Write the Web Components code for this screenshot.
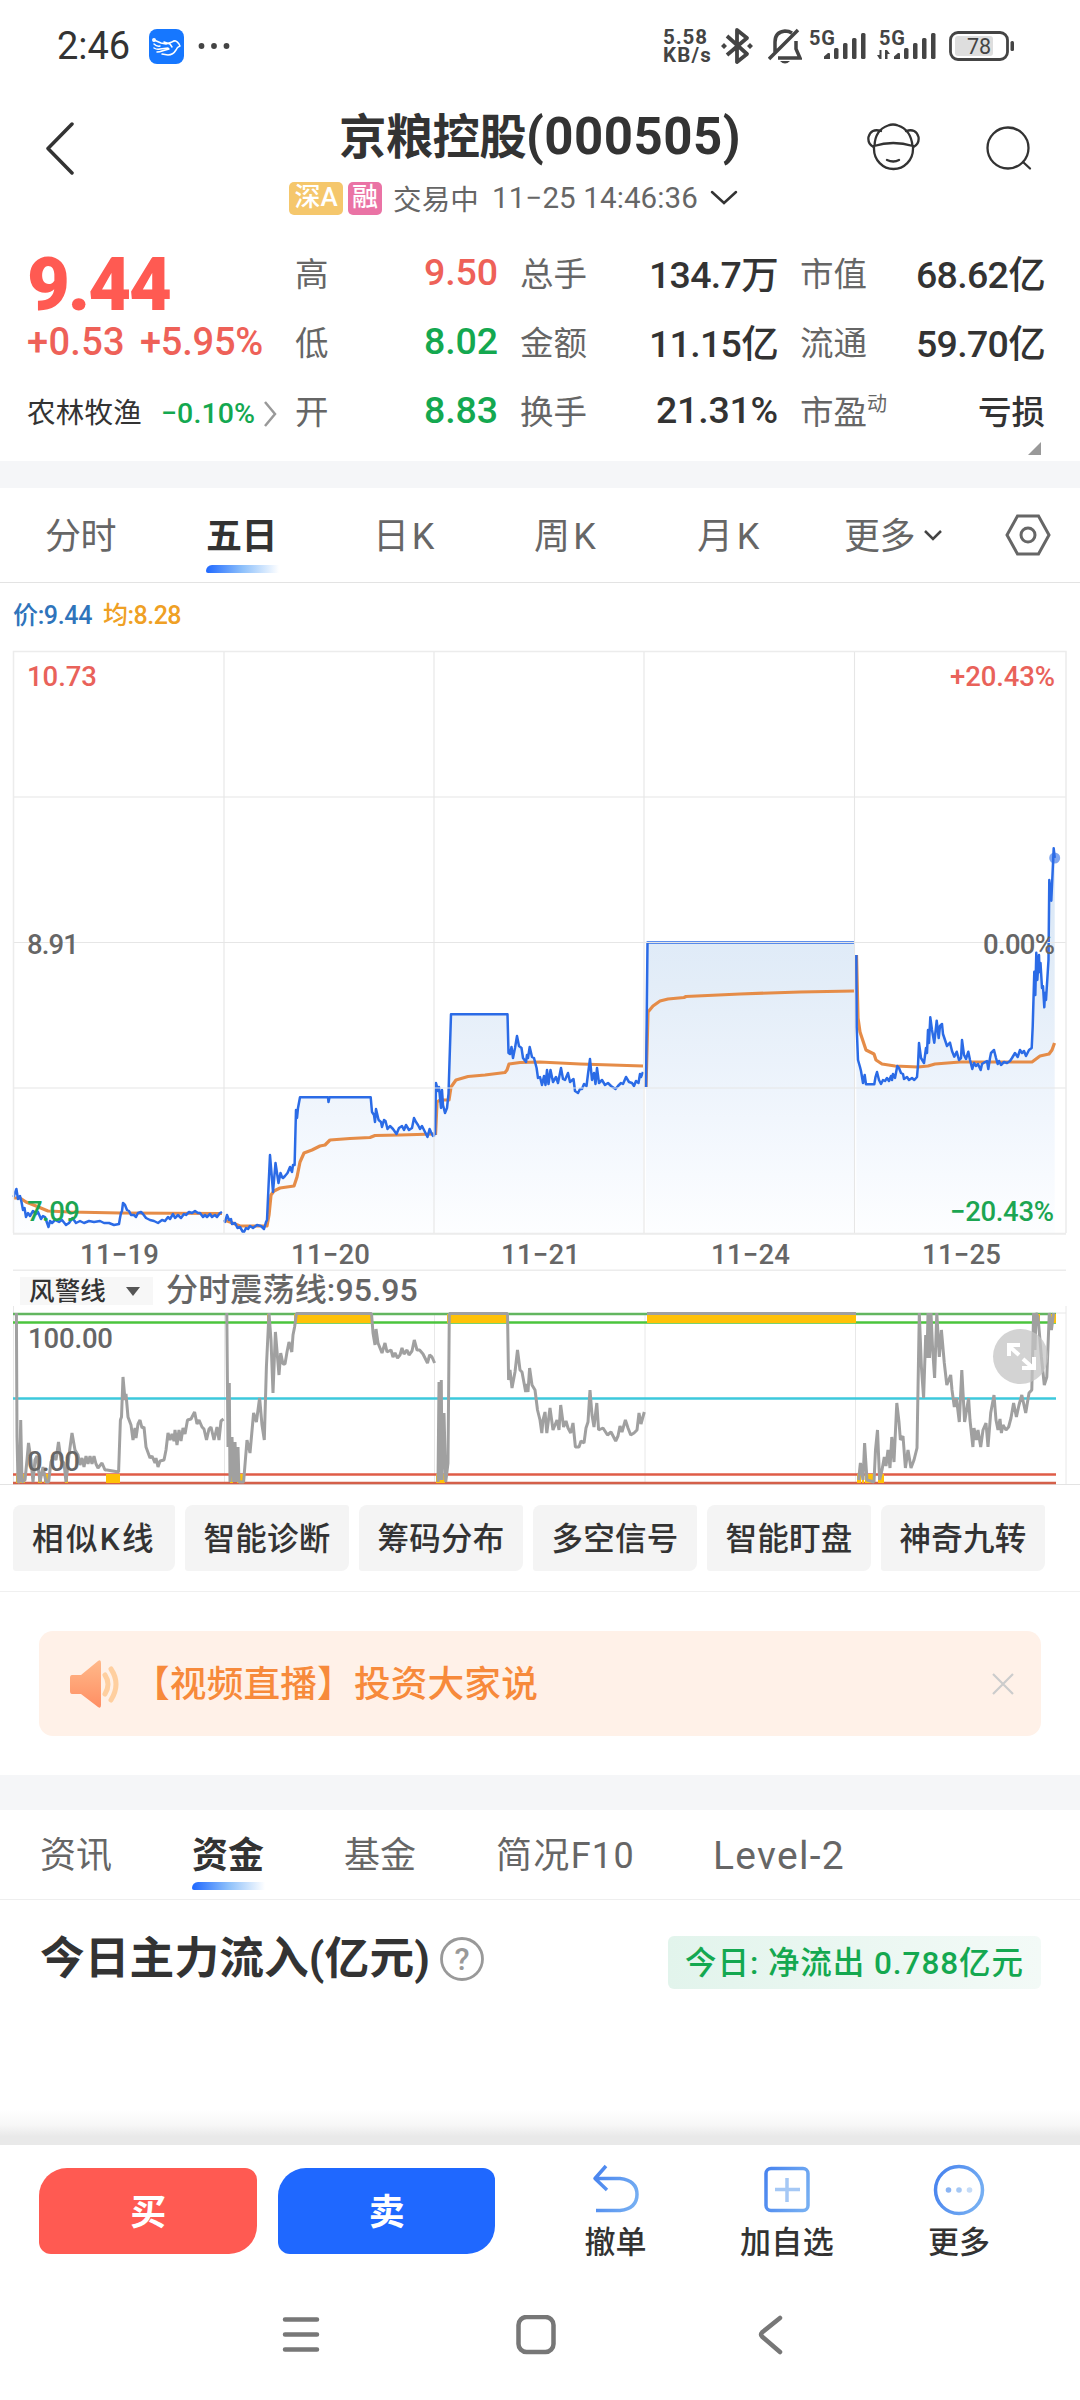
<!DOCTYPE html>
<html lang="zh-CN">
<head>
<meta charset="utf-8">
<title>京粮控股(000505)</title>
<style>
  html, body {
    margin: 0;
    padding: 0;
    background: #fff;
  }

  body {
    width: 1080px;
    height: 2400px;
    overflow: hidden;
    font-family: Roboto, "Noto Sans CJK SC", sans-serif;
    color: #333;
  }

  stock-page {
    display: flex;
    flex-direction: column;
    height: 2400px;
  }
</style>
</head>
<body>
<stock-page>
  <status-bar></status-bar>
  <stock-header name="京粮控股" code="000505"></stock-header>
  <quote-panel></quote-panel>
  <section-gap style="--h: 27px"></section-gap>
  <tab-strip style="--h: 94px; --dx: 45px; --line: #e3e3e3">
    <tab-item style="width: 161px" w="71">分时</tab-item>
    <tab-item style="width: 167px" w="71" active>五日</tab-item>
    <tab-item style="width: 161px" w="64">日K</tab-item>
    <tab-item style="width: 163px" w="65">周K</tab-item>
    <tab-item style="width: 147px" w="66">月K</tab-item>
    <tab-item style="width: 161px" w="71" more>更多</tab-item>
    <svg width="46" height="42" viewBox="0 0 46 42" fill="none" stroke="#666" stroke-width="3"><path d="M12.500 2h21L44 21 33.500 40h-21L2 21z"/><circle cx="23" cy="21" r="7"/></svg>
  </tab-strip>
  <price-chart></price-chart>
  <alert-chart></alert-chart>
  <chip-row>
    <chip-item style="width: 162px" w="124">相似K线</chip-item>
    <chip-item w="127">智能诊断</chip-item>
    <chip-item w="127">筹码分布</chip-item>
    <chip-item w="127">多空信号</chip-item>
    <chip-item w="127">智能盯盘</chip-item>
    <chip-item w="127">神奇九转</chip-item>
  </chip-row>
  <live-banner>【视频直播】投资大家说</live-banner>
  <section-gap style="--h: 35px"></section-gap>
  <tab-strip style="--h: 89px; --dx: 40px; --line: #eee">
    <tab-item style="width: 152px" w="72">资讯</tab-item>
    <tab-item style="width: 152px" w="72" active>资金</tab-item>
    <tab-item style="width: 152px" w="72">基金</tab-item>
    <tab-item style="width: 217px" w="139">简况F10</tab-item>
    <tab-item style="--lift: -2px; font-size: 39px" w="132">Level-2</tab-item>
  </tab-strip>
  <fund-summary></fund-summary>
  <trade-bar></trade-bar>
  <system-nav></system-nav>
</stock-page>

<script>
/**
 * Attach an open shadow root holding the given markup.
 * @param {HTMLElement} el
 * @param {string} html
 */
function render(el, html) {
  const template = document.createElement('template');
  template.innerHTML = html;
  el.attachShadow({mode: 'open'}).appendChild(template.content.cloneNode(true));
}

/**
 * Top status bar: clock, network, battery.
 */
class StatusBar extends HTMLElement {
  constructor() {
    super();
    const bars = (x) => `
      <path d="M${x} 29v-2.500l4-3.500q2-.500 2 1v5z"/>
      <rect x="${x + 10}" y="18" width="4.500" height="11" rx="1.500"/>
      <rect x="${x + 19}" y="13" width="4.500" height="16" rx="1.500"/>
      <rect x="${x + 28}" y="8" width="4.500" height="21" rx="1.500"/>
      <rect x="${x + 37}" y="3" width="4.500" height="26" rx="1.500"/>`;
    render(this, `
      <style>
        :host { display: flex; align-items: center; flex: none; height: 92px; padding: 0 65px 0 57px; box-sizing: border-box; }
        .time { font-size: 38px; line-height: 44px; }
        .app { margin-left: 19px; }
        .dots { margin-left: 14px; }
        .fill { flex: 1; }
        .speed { font-size: 20.500px; line-height: 18px; font-weight: 700; width: 49px; margin-right: 1px; color: #444; }
        .speed div { white-space: nowrap; }
        svg { flex: none; display: block; }
        .bt { margin-left: 7px; }
        .bell { margin-left: 14px; }
        .cell { margin-left: 7px; }
        .cell + .cell { margin-left: 10px; }
        .bat { margin-left: 12px; }
      </style>
      <fit-text class="time" w="73">2:46</fit-text>
      <svg class="app" width="35" height="35" viewBox="0 0 35 35">
        <rect width="35" height="35" rx="8" fill="#1677ff"/>
        <g fill="none" stroke="#fff" stroke-width="1.500" stroke-linecap="round" stroke-linejoin="round">
          <path d="M5 11l7 3 5 1 6-2q4-3 7 2l1 2q-3 1-4 4-3 5-8 5l-6-1M5 15q3 3 6 2M5 19q3 2 6 1l8-1M8 23q3 0 5-1l7-2M15 13l6 2 2 3"/>
          <circle cx="5" cy="11" r="1.200"/>
        </g>
      </svg>
      <svg class="dots" width="32" height="8" fill="#444"><circle cx="3.500" cy="4" r="2.900"/><circle cx="16" cy="4" r="2.900"/><circle cx="28.500" cy="4" r="2.900"/></svg>
      <div class="fill"></div>
      <div class="speed"><div><fit-text w="45">5.58</fit-text></div><div><fit-text w="49">KB/s</fit-text></div></div>
      <svg class="bt" width="34" height="38" viewBox="0 0 34 38" fill="none" stroke="#444" stroke-width="3.800" stroke-linejoin="round">
        <path d="M7 9l20 18-10 8V3l10 8L7 28"/><path d="M1 19l3-3 3 3-3 3zM27 19l3-3 3 3-3 3z" fill="#444" stroke="none"/>
      </svg>
      <svg class="bell" width="34" height="38" viewBox="0 0 34 38" fill="none" stroke="#444" stroke-width="3.500">
        <path d="M1 32L30 3M7 25V15q0-10 10-11 4 0 7 2M28 14v8l4 9H10"/><path d="M12 34h10q-5 5-10 0z" fill="#444" stroke="none"/>
      </svg>
      <svg class="cell" width="58" height="44" viewBox="0 -6 58 44" fill="#444">
        <text x="0" y="15" font-size="20" font-weight="700" textLength="26">5G</text>${bars(15)}
      </svg>
      <svg class="cell" width="60" height="44" viewBox="0 -6 60 44" fill="#444">
        <text x="2" y="15" font-size="20" font-weight="700" textLength="26">5G</text>${bars(17)}
        <path d="M4.500 20v9H2.500L0 25h2.500v-5zM8 29v-9h2l3 4h-2.500v5z"/>
      </svg>
      <svg class="bat" width="66" height="30" viewBox="0 0 66 30">
        <rect x="6" y="5" width="38" height="20" rx="3" fill="#dedede"/>
        <rect x="1.500" y="1.500" width="57" height="27" rx="7.500" fill="none" stroke="#444" stroke-width="2.800"/>
        <rect x="61.500" y="10" width="3.500" height="10" rx="1.500" fill="#444"/>
        <text x="18" y="22.500" font-size="21.500" fill="#444" textLength="24">78</text>
      </svg>
    `);
  }
}

/**
 * Title row with back, assistant and search buttons.
 */
class StockHeader extends HTMLElement {
  constructor() {
    super();
    render(this, `
      <style>
        :host { display: grid; grid-template-columns: 289px 1fr 289px; flex: none; height: 138px; }
        .mid { display: flex; flex-direction: column; align-items: center; padding-top: 14px; }
        .title { display: flex; align-items: baseline; height: 62px; font-size: 47.500px; line-height: 62px; font-weight: 700; white-space: nowrap; }
        .code { font-size: 51px; }
        .sub { display: flex; align-items: center; align-self: stretch; margin-top: 12px; height: 36px; font-size: 28.500px; color: #666; white-space: nowrap; }
        .tag { display: block; height: 33px; line-height: 31px; border-radius: 5px; color: #fff; text-align: center; font-size: 26px; font-weight: 500; }
        .sz { width: 54px; background: #f5c76c; margin-right: 5px; }
        .rong { width: 34px; background: #ea73a5; margin-right: 11px; }
        .clock { margin-left: 13px; font-size: 29.500px; }
        .down { margin-left: 12px; }
        .cn { margin-top: -2px; }
        .back { padding: 30px 0 0 44px; }
        .tools { display: flex; gap: 66px; padding: 31px 0 0 75px; }
        svg { display: block; fill: none; stroke: #333; stroke-linecap: round; flex: none; }
      </style>
      <div class="back"><svg width="32" height="54" viewBox="0 0 32 54" stroke-width="3.500"><path d="M28 2L4 26.500 28 51" stroke-linejoin="round"/></svg></div>
      <div class="mid">
        <div class="title"><fit-text w="187">${this.getAttribute('name')}</fit-text><fit-text class="code" w="215">(${this.getAttribute('code')})</fit-text></div>
        <div class="sub">
          <span class="tag sz">深A</span><span class="tag rong">融</span>
          <fit-text class="cn" w="86">交易中</fit-text><fit-text class="clock" w="206">11−25 14:46:36</fit-text>
          <svg class="down" width="28" height="16" viewBox="0 0 28 16" stroke-width="2.500"><path d="M2 2l12 11L26 2"/></svg>
        </div>
      </div>
      <div class="tools">
        <svg width="54" height="50" viewBox="0 0 54 50" stroke-width="2.300">
          <path d="M8.500 23Q9 7 22 2.500q5-2 10 0Q45 7 46.500 23M8 23q19-6 39 0M8 23v3a19.500 20 0 0 0 39 0v-3M21 37q6.500 3 12 0"/>
          <path d="M15 8Q5 5 2.500 14q-1 7 5 10M40 8q10-3 12.500 6 1 7-5 10"/>
        </svg>
        <svg width="50" height="50" viewBox="0 0 50 50" stroke-width="2.300"><circle cx="22" cy="25" r="20.500"/><path d="M37 39l7 6.500"/></svg>
      </div>
    `);
  }
}

/**
 * Last price and the key figures beside it.
 */
class QuotePanel extends HTMLElement {
  constructor() {
    super();
    const rows = [
      ['高', '9.50', 74, 'up', '总手', '134.7万', 129, '', '市值', '68.62亿', 129, ''],
      ['低', '8.02', 74, 'down', '金额', '11.15亿', 129, '', '流通', '59.70亿', 129, ''],
      ['开', '8.83', 74, 'down', '换手', '21.31%', 122, '', '市盈', '亏损', 67, 'cn'],
    ];
    const cells = rows.map((row) => {
      let html = '';
      for (let i = 0; i < row.length; i += 4) {
        const [label, value, w, cls] = row.slice(i, i + 4);
        const mark = label === '市盈' ? '<sup>动</sup>' : '';
        html += `<div class="cell"><span class="label">${label}${mark}</span><fit-text class="${cls}" w="${w}">${value}</fit-text></div>`;
      }
      return html;
    }).join('');
    render(this, `
      <style>
        :host { display: grid; grid-template-columns: 268px 1fr; flex: none; height: 231px; padding: 0 35px 0 27px; box-sizing: border-box; overflow: hidden; }
        .price { font-size: 74px; line-height: 80px; font-weight: 900; color: #ff5a52; margin-top: 15px; height: 80px; }
        .chg { display: flex; gap: 15px; font-size: 38px; line-height: 44px; color: #ee6158; margin-top: -5px; font-weight: 500; }
        .sector { display: flex; align-items: center; margin-top: 30px; line-height: 40px; font-size: 28.500px; }
        .sector .down { margin: 0 8px 0 19px; font-weight: 500; }
        .grid { display: grid; grid-template-columns: 203px 258px 245px; column-gap: 22px; grid-template-rows: 69px 69px 69px; padding-top: 7px; }
        .cell { display: flex; justify-content: space-between; align-items: center; font-size: 37.500px; font-weight: 500; white-space: nowrap; }
        .label { font-size: 33.500px; color: #666; font-weight: 400; }
        .up { color: #ee6158; }
        .down { color: #14a850; }
        .cn { font-size: 33.500px; font-weight: 500; }
        sup { font-size: 20px; vertical-align: 13px; line-height: 0; }
        .corner { justify-self: end; grid-column: 3; margin-top: -2px; margin-right: 4px; width: 13px; height: 13px; background: #999; clip-path: polygon(100% 0, 100% 100%, 0 100%); }
      </style>
      <div>
        <div class="price"><fit-text w="143">9.44</fit-text></div>
        <div class="chg"><fit-text w="98">+0.53</fit-text><fit-text w="123">+5.95%</fit-text></div>
        <div class="sector"><fit-text w="115">农林牧渔</fit-text><fit-text class="down" w="94">−0.10%</fit-text>
          <svg width="14" height="28" viewBox="0 0 14 28" fill="none" stroke="#999" stroke-width="2.500"><path d="M2 2l10 12L2 26"/></svg></div>
      </div>
      <div class="grid">${cells}<div class="corner"></div></div>
    `);
  }
}

class SectionGap extends HTMLElement {
  constructor() {
    super();
    render(this, '<style>:host { display: block; flex: none; height: var(--h); background: #f5f6f8; }</style>');
  }
}

class TabStrip extends HTMLElement {
  constructor() {
    super();
    render(this, `
      <style>
        :host { display: flex; align-items: center; flex: none; height: var(--h); padding-left: var(--dx); border-bottom: 1.500px solid var(--line); }
      </style>
      <slot></slot>
    `);
  }
}

/**
 * One tab; "active" draws the underline, "more" the small arrow.
 */
class TabItem extends HTMLElement {
  constructor() {
    super();
    const arrow = this.hasAttribute('more')
      ? '<svg width="20" height="12" viewBox="0 0 20 12" fill="none" stroke="#444" stroke-width="2.500"><path d="M2 2l8 8 8-8"/></svg>' : '';
    render(this, `
      <style>
        :host { display: flex; align-items: center; gap: 8px; height: 100%; position: relative; flex: none; font-size: 36px; color: #666; }
        :host([active]) { font-weight: 700; color: #333; }
        :host([active])::after {
          content: ""; position: absolute; left: 0; bottom: 9px; width: 73px; height: 8px;
          border-radius: 6px 0 0 2px; background: linear-gradient(90deg, #1f68ff, #8dc0fb 50%, #fff);
        }
        fit-text { margin-bottom: var(--lift, 5px); }
      </style>
      <fit-text w="${this.getAttribute('w')}"><slot></slot></fit-text>${arrow}
    `);
  }
}

// Five trading days, x runs over the plot area and y grows downwards
const priceDays = [
  '13.500,1197 16.400,1189 18,1199 20,1196 21.500,1202 23,1210 24.500,1208 26,1217 28,1213 30,1216 33,1211 36,1214 38,1212 41,1219 43,1216 45,1217 48.500,1227 50,1221 52,1223 55,1220 59,1222 62,1220 66,1225 69,1223 72.500,1218 76,1223 80,1221 84,1223 89,1221 94,1222 100,1221 104,1223 109,1223 114,1225 119,1224 120,1218 121,1213 122,1211 123,1203 125,1205 127,1210 129,1211 131,1215 134,1215 136,1217 138,1213 141,1212 143,1214 146,1218 150,1220 154,1221 158,1223 162,1220 165,1221 168,1217 170,1219 173,1214 175,1218 178,1215 181,1218 184,1214 186,1215 189,1212 192,1213 195,1211 198,1213 200,1213 203,1217 205,1215 207,1217 210,1214 212,1217 215,1215 217,1217 220,1213 222,1212',
  '224,1220 225,1222 227,1215 229,1220 231,1219 232,1224 235,1223 237.500,1228 240,1227 243.500,1233 246,1228 248,1229 250,1226 253,1228 257,1225 261,1226 264,1229 266,1222 267,1220 268.500,1187 270,1155 271.500,1173 273,1192 275.500,1163 277,1173 278.500,1183 280.500,1173 282,1177 283,1178 285,1176 287.500,1173 290,1167 291,1170 292,1172 293,1165 294.600,1165 296,1110 297,1118 298,1108 300,1097.300 328,1097.300 328.500,1102 329.500,1097.300 370.700,1097.300 372,1112 374,1115 375,1122 376,1109 378.600,1120 381,1122 382,1127 384,1120 385.500,1121 387.500,1129 390,1126 393,1129 396.500,1134 399,1128 402,1126 404,1130 406,1125 409,1130 412,1128 414,1118 416,1122 418,1125 420,1129 422,1126 424,1130 427.500,1137 429.600,1129 431,1132 433,1136 435,1135',
  '435,1135 436,1083 438,1091 439,1087 441,1108 442,1090 443,1105 445,1113 447,1108 448.500,1094 451,1014.300 507.500,1014.300 508.500,1053 510,1054 511.500,1047 513,1058 515,1048 517,1036 519,1046 521.500,1048 523,1058 526,1062 527,1055 528,1058 529.700,1047 532,1057 534,1058 536.600,1068 538,1078 540,1077 542,1085 544,1076 545.500,1085 547,1070 548.500,1084 550.500,1070 553,1082 556,1077 558,1083 561,1068 563,1079 565,1080 568,1073 570,1082 573.500,1079 575,1091 578,1093 580,1089 582,1089 584,1084 586.500,1086 588,1074 590,1059 592,1080 594,1073 595.500,1084 597,1068 599,1083 602,1080 605,1085 608,1083 611,1086 615.500,1089 618,1086 621,1083 623,1084 626,1077 629,1082 632,1083 634,1086 636,1081 638.500,1083 640,1074 641,1077 643,1072',
  '646,1087 647.500,942.500 854.500,942.500',
  '856.300,955 856.700,1027 858,1060 860,1067 861,1071 863,1083 864.700,1075 866,1084.300 874.300,1084.300 875.500,1077 877,1072 879,1080 881,1084 883,1080 885,1081 887,1078 889,1081 891,1076 892,1080 893,1074 895,1078 897.300,1066 899,1068 901,1073 903,1074 904,1079 907,1077 909,1080 912,1078 914.300,1080 917,1077 918,1065 919,1043 921,1058 924,1063 926,1048 927,1053 928,1030 929,1043 930.300,1017.300 932,1030 934.300,1042.700 936.700,1020.700 938.700,1038 940,1026 942,1024 943,1034 945,1040 947,1046 950,1042.700 952,1051 954.300,1056.700 956.700,1051.700 959,1060 961,1058 962,1040 964,1055 966,1059 968.300,1051.700 970,1060 972.300,1069 974,1063 976,1066 978,1064 980.700,1070 982,1064 985,1062 987,1061 988.300,1069 990,1058 991,1053 994,1050 996,1058 997.700,1064 999,1061 1001,1065 1004,1062 1007,1063 1010,1061 1012,1058 1015,1053 1017.700,1057 1020,1050 1022,1053 1024,1051 1026,1056 1029,1050 1031.700,1048 1032.700,1026.700 1034.300,971.700 1035.300,995 1036.300,952.700 1037.300,980 1039,955 1039.500,972 1040.500,963 1042,988 1043,986 1044.300,1007.300 1045,993 1046,1000 1047.500,976 1048.500,960 1049.300,880 1051.300,900.700 1053.700,848.300 1054.700,858',
];

const averageDays = [
  '13.500,1198 20,1198 26,1202 36,1206 48,1211 70,1212 120,1213 222,1213.500',
  '224,1220 230,1222 240,1226 250,1226 267,1226 269,1215 271,1195 274,1191 280,1188 294,1186 297,1177 300,1162 304,1153 312,1150 320,1146 325,1145 330,1140 350,1138.500 370,1137.500 375,1135.500 400,1135 434,1134',
  '435.500,1135 437,1102 440,1100 449,1100 451,1087 456,1080 468,1076.500 485,1075 505,1072.500 507,1070 509,1064 520,1062.500 540,1062 580,1064 643,1066',
  '646,1087 648,1012 653,1006 660,1001 668,999 684,997.500 686,996.500 740,994 800,992 854,991',
  '856.500,955 858,1018 860,1032 866,1050 874,1054 876,1060 882,1064 895,1066 918,1067 928,1066 935,1064 960,1062 1032,1062 1040,1056 1049,1054 1052,1050 1054.500,1043',
];

/**
 * Five day price chart with its legend and axis labels.
 */
class PriceChart extends HTMLElement {
  constructor() {
    super();
    const areas = priceDays.map((pts) => {
      const first = pts.split(',')[0];
      const last = pts.split(' ').pop().split(',')[0];
      return `<polygon points="${first},1233 ${pts} ${last},1233"/>`;
    }).join('');
    const lines = (days) => days.map((pts) => `<polyline points="${pts}"/>`).join('');
    const dates = [['11−19', 82], ['11−20', 293], ['11−21', 503], ['11−24', 713], ['11−25', 924]];
    render(this, `
      <style>
        :host { display: block; flex: none; height: 688px; }
        .legend { display: flex; gap: 11px; height: 60px; padding: 0 0 5px 13px; align-items: center; font-size: 25px; font-weight: 500; }
        .p { color: #2f74bb; }
        .a { color: #efa024; }
        svg { display: block; }
        text { font-size: 27.500px; font-weight: 500; }
      </style>
      <div class="legend"><fit-text class="p" w="79">价:9.44</fit-text><fit-text class="a" w="78">均:8.28</fit-text></div>
      <svg width="1080" height="623" viewBox="0 648 1080 623">
        <defs><linearGradient id="fade" gradientUnits="userSpaceOnUse" x1="0" y1="850" x2="0" y2="1233">
          <stop offset="0" stop-color="#d7e6f6"/><stop offset=".35" stop-color="#e3edf8"/><stop offset=".7" stop-color="#f1f6fd"/><stop offset="1" stop-color="#fdfeff"/>
        </linearGradient></defs>
        <g fill="url(#fade)">${areas}</g>
        <g fill="none" stroke="#e58c48" stroke-width="3.200" stroke-linejoin="round">${lines(averageDays)}</g>
        <g fill="none" stroke="#2b6be6" stroke-width="2.500" stroke-linejoin="round">${lines(priceDays)}</g>
        <path d="M13 797H1066M13 942.500H1066M13 1088H1066M224 651V1233M434 651V1233M644 651V1233M854.500 651V1233" stroke="#e6e6e6" stroke-width="1.100" fill="none"/>
        <path d="M13.500 1233V651.500H1066V1233" stroke="#ececec" stroke-width="1.500" fill="none"/>
        <path d="M13 1233.700H1066M13 1270.500H1066" stroke="#ececec" stroke-width="2"/>
        <circle cx="1054.700" cy="858" r="5.500" fill="#2b6be6" opacity=".6"/>
        <g fill="#e9625a"><text x="27" y="685.500" textLength="70">10.73</text><text x="950" y="685.500" textLength="105">+20.43%</text></g>
        <g fill="#666"><text x="27" y="953.500" textLength="52">8.91</text><text x="983" y="953.500" textLength="72">0.00%</text></g>
        <g fill="#1ca552"><text x="27" y="1221" textLength="53">7.09</text><text x="950" y="1221" textLength="104">−20.43%</text></g>
        <g fill="#666">${dates.map(([d, x]) => `<text x="${x - 2}" y="1263.500" textLength="79">${d}</text>`).join('')}</g>
      </svg>
    `);
  }
}

const swingDays = [
  '16.400,1313 17,1437 18,1482 19.500,1482 20.700,1420 22,1482 25,1480 27,1460 28.500,1443 31,1460 33,1482 35,1460 37,1456 40,1482 43,1467 46,1482 48.600,1482 51,1462 54,1456 56,1460 58.500,1442 61,1460 64,1463 66,1482 69,1455 72,1433 75,1450 78,1455 80,1465 82,1458 84,1467 86,1456 88,1464 90,1456 92,1464 94,1456 96,1464 98,1468 102,1463 105,1470 107,1470 118.600,1472 120.400,1420 121.500,1417 123,1377 125,1400 126,1394 128,1417 131,1425 133,1440 135,1428 136,1438 138,1424 140,1420 142,1428 144,1427 146,1447 150,1458 152,1456 155,1463 156,1458 158,1467 160,1461 164,1460 166,1450 168,1433 170,1440 172,1434 174,1441 175,1430 177,1445 179,1430 181,1441 183,1428 185,1434 187.500,1420 191,1419 194.600,1412 197,1424 199,1420 202,1427 204,1429 206.500,1440 209,1429 211,1427 214,1440 217,1427 219,1440 221,1421 223.500,1419',
  '226.800,1313 228,1447 229.300,1383 230,1482 232,1437 233.500,1482 235,1442 236.500,1482 238,1447 239,1482 243.600,1482 247,1440 250,1453 253.600,1413 256.400,1422 259.600,1398 262,1425 264.300,1440 266.400,1367 269,1313 271,1340 273,1393 275.400,1332 279,1375 280.700,1353 283,1364 285,1364 287,1352 289,1342 291.800,1352 293,1335 294.600,1327 296.400,1313.500 371.500,1313.500 373,1333 375,1345 376,1329 378,1343 382,1353 385,1343 387,1352 391,1350 393,1357 395,1353 397.500,1358 400,1355 402,1348 404,1354 407,1350 409,1355 412,1351 414.300,1340 417,1350 419.600,1350 423,1354 427.500,1363 429.600,1355 432,1357 434.600,1363',
  '438,1482 439,1382 440.500,1480 441.300,1380 442,1480 444,1413 445.700,1482 448,1463 449.300,1313.500 507.500,1313.500 508.600,1380 510,1370 512,1388 515,1372 517.500,1350 520,1370 522,1372 525.700,1392 527,1384 528,1392 529.600,1368 532,1385 535,1390 537.500,1410 540,1420 541.800,1433 543,1420 545,1412 546.800,1433 550,1408 553,1430 557,1420 559,1430 560.700,1405 563.600,1427 566,1421 568,1428 570.700,1433 573,1423 575.400,1447 579,1447 581,1441 584,1443 586,1428 588,1422 590,1390 592,1415 594,1427 596.800,1403 598.600,1430 603,1428 607.500,1435 611,1432 615.700,1441 618,1436 620,1426 622,1432 625.400,1420 628,1428 630.700,1435 634,1433 637,1430 639,1413 641,1424 644.300,1412',
  '647,1313.500 856,1313.500',
  '858.600,1480 860.400,1463 863,1480 864.600,1443 867,1480 874,1482 875.500,1450 877.500,1430 879.600,1480 882,1470 884.300,1457 886,1466 888,1450 890,1468 891.800,1437 894,1462 896.800,1403 899,1422 900.400,1440 903,1436 905.400,1468 908,1450 911,1468 914,1460 917,1448 919.300,1313 921.400,1367 923.600,1398 925.700,1335 927,1358 928,1313 929.500,1358 931,1313 932.500,1347 934.600,1378 936.800,1313 939.300,1357 941.400,1330 944.300,1363 946.800,1385 950.700,1375 952,1390 954.300,1407 956.400,1398 959.300,1422 961.800,1370 964.600,1422 968.600,1398 970,1420 972.900,1447 974,1428 976.400,1440 978,1430 980.700,1447 983,1430 986,1423 988,1447 990.700,1413 994,1395 996,1420 998,1430 1000,1419 1001.400,1433 1003,1425 1006,1430 1008.600,1427 1011,1418 1013.600,1403 1016.400,1417 1019,1405 1021.800,1395 1025.700,1413 1029,1393 1031.800,1390 1033.600,1313 1035,1350 1036,1313 1038,1317 1041.400,1357 1044.300,1385 1046.800,1377 1049.300,1313 1051.400,1330 1053.600,1313',
];

/**
 * Indicator panel under the price chart.
 */
class AlertChart extends HTMLElement {
  constructor() {
    super();
    const high = [[267, 3], [294, 3], [297, 76], [447, 61], [647, 209], [928, 3], [936, 2], [1038, 2], [1050, 6]];
    const low = [[16, 3], [20, 5], [38, 4], [44, 4], [65, 3], [106, 14], [230, 3], [237, 7], [436, 9], [857, 4], [862, 2], [865, 9], [878, 6]];
    const blocks = (list, y) => list.map(([x, w]) => `<rect x="${x}" y="${y}" width="${w}" height="9"/>`).join('');
    render(this, `
      <style>
        :host { display: block; flex: none; height: 215px; }
        .head { display: flex; align-items: center; height: 35px; padding-left: 20px; }
        .pick { display: flex; align-items: center; justify-content: space-between; box-sizing: border-box; width: 133px; height: 28px; padding: 0 12px 0 9px; margin-right: 13px; margin-top: 4px; background: #f7f7f7; font-size: 25.500px; font-weight: 500; line-height: 28px; }
        .name { font-size: 32px; line-height: 36px; margin-top: 3px; color: #666; font-weight: 500; }
        svg { display: block; }
        text { font-size: 27.500px; fill: #666; font-weight: 500; }
      </style>
      <div class="head">
        <div class="pick"><fit-text w="77">风警线</fit-text><svg width="16" height="10"><path d="M1 1h14L8 10z" fill="#555"/></svg></div>
        <fit-text class="name" w="252">分时震荡线:95.95</fit-text>
      </div>
      <svg width="1080" height="180" viewBox="0 1306 1080 180">
        <path d="M13.500 1306V1484M224.500 1314V1484M434.500 1314V1484M645 1314V1484M855.500 1314V1484M1066 1306V1484M1056 1313H1066" stroke="#e8e8e8" fill="none"/>
        <path d="M0 1484.500H1080" stroke="#e3e3e3"/>
        <g stroke-width="2.600"><path d="M13 1314H1056" stroke="#62b65f"/><path d="M13 1322.500H1056" stroke="#4bc53d"/><path d="M13 1398.500H1056" stroke="#3cc9dc"/><path d="M13 1474.500H1056" stroke="#df5c47"/><path d="M13 1483H1056" stroke="#d4604a"/></g>
        <g fill="#ffc107">${blocks(high, 1314)}${blocks(low, 1474)}</g>
        <g fill="none" stroke="#a0a0a0" stroke-width="3" stroke-linejoin="bevel">${swingDays.map((pts) => `<polyline points="${pts}"/>`).join('')}</g>
        <text x="28" y="1347.500" textLength="85">100.00</text>
        <text x="27" y="1470.500" textLength="53">0.00</text>
        <circle cx="1020.500" cy="1356.500" r="27.500" fill="#c4c4c4" opacity=".75"/>
        <path d="M1019 1355l-10-9M1009 1356v-11h11M1023 1359l10 9M1034 1357v11h-12" fill="none" stroke="#fff" stroke-width="4"/>
      </svg>
    `);
  }
}

class ChipRow extends HTMLElement {
  constructor() {
    super();
    render(this, `
      <style>
        :host { display: flex; gap: 10px; flex: none; box-sizing: border-box; height: 106px; padding: 19px 35px 20px 13px; border-bottom: 1.500px solid #f0f0f0; }
      </style>
      <slot></slot>
    `);
  }
}

class ChipItem extends HTMLElement {
  constructor() {
    super();
    render(this, `
      <style>
        :host { display: flex; align-items: center; justify-content: center; box-sizing: border-box; width: 164px; height: 66px; padding-bottom: 5px; background: #f4f4f4; border-radius: 8px 3px 8px 3px; font-size: 31.500px; font-weight: 500; }
      </style>
      <fit-text w="${this.getAttribute('w')}"><slot></slot></fit-text>
    `);
  }
}

class LiveBanner extends HTMLElement {
  constructor() {
    super();
    render(this, `
      <style>
        :host { display: block; flex: none; box-sizing: border-box; height: 183px; padding: 39px 39px 0; }
        .box { display: flex; align-items: center; height: 105px; padding: 0 26px 0 30px; border-radius: 14px; background: #fff1e8; color: #f78a3b; font-size: 36.700px; font-weight: 500; }
        .text { flex: 1; margin-left: 14px; margin-top: 2px; line-height: 50px; }
      </style>
      <div class="box">
        <svg width="50" height="52" viewBox="0 0 50 52">
          <defs><linearGradient id="horn" x1="0" y1="0" x2="0" y2="1"><stop offset="0" stop-color="#ffb98a"/><stop offset="1" stop-color="#ff8e63"/></linearGradient></defs>
          <path d="M36 17q6 9 0 19M42 11q10 15 0 31" fill="none" stroke="#ffcf9f" stroke-width="5" stroke-linecap="round"/>
          <path d="M3 17h9L29 3q3-2 3 2v42q0 4-3 2L12 36H3q-2 0-2-3V20q0-3 2-3z" fill="url(#horn)"/>
        </svg>
        <span class="text"><fit-text w="405"><slot></slot></fit-text></span>
        <svg width="24" height="24" viewBox="0 0 24 24" stroke="#ccc" stroke-width="2.200"><path d="M2 2l20 20M22 2L2 22"/></svg>
      </div>
    `);
  }
}

class FundSummary extends HTMLElement {
  constructor() {
    super();
    render(this, `
      <style>
        :host { display: flex; flex-direction: column; justify-content: space-between; flex: none; height: 245px; }
        .row { display: flex; align-items: center; padding: 30px 39px 0 40px; height: 60px; }
        h2 { margin: -3px 0 0; font-size: 44.700px; font-weight: 700; line-height: 60px; }
        svg { margin: -2px 0 0 9px; }
        .flow { display: flex; align-items: center; justify-content: center; box-sizing: border-box; margin: 4px 0 0 auto; padding-bottom: 4px; width: 373px; height: 53px; border-radius: 6px; background: linear-gradient(90deg, #e2f4ec, #f3faf7); color: #14a850; font-size: 31.500px; font-weight: 500; }
        .shade { height: 36px; background: linear-gradient(#fff, #f7f7f7 45%, #e9e9e9 76%, #e9e9e9); }
      </style>
      <div class="row">
        <h2><fit-text w="390">今日主力流入(亿元)</fit-text></h2>
        <svg width="46" height="46" viewBox="0 0 46 46"><circle cx="23" cy="23" r="20.500" fill="none" stroke="#999" stroke-width="2.800"/><text x="23" y="34" text-anchor="middle" font-size="31" font-weight="500" fill="#999">?</text></svg>
        <div class="flow"><fit-text w="339">今日: 净流出 0.788亿元</fit-text></div>
      </div>
      <div class="shade"></div>
    `);
  }
}

/**
 * Buy / sell buttons and the quick actions.
 */
class TradeBar extends HTMLElement {
  constructor() {
    super();
    render(this, `
      <style>
        :host { display: flex; flex: none; height: 133px; padding: 23px 35px 0 39px; box-sizing: border-box; }
        .btn { display: flex; align-items: center; justify-content: center; box-sizing: border-box; width: 218px; height: 86px; padding: 0 0 5px 1px; border-radius: 28px 12px 28px 12px; margin-right: 21px; color: #fff; font-size: 36px; font-weight: 700; }
        .buy { background: #ff5a52; }
        .sell { background: #1f68ff; }
        .acts { display: grid; grid-template-columns: 171px 172px 172px; margin-left: 14px; margin-top: -8px; }
        .act { display: flex; flex-direction: column; align-items: center; font-size: 31px; font-weight: 500; line-height: 42px; }
        svg { display: block; fill: none; stroke: url(#g); stroke-width: 3.500; margin-bottom: 2px; flex: none; }
      </style>
      <div class="btn buy">买</div>
      <div class="btn sell">卖</div>
      <div class="acts">
        <div class="act">
          <svg width="56" height="60" viewBox="0 0 56 60"><defs><linearGradient id="g" gradientUnits="userSpaceOnUse" x1="0" y1="0" x2="56" y2="20"><stop offset="0" stop-color="#3f7bee"/><stop offset="1" stop-color="#75aef2"/></linearGradient></defs>
            <path d="M18 6L7 18.500 19 30M7 18.500h25q17 2 17 16t-17 16H8" stroke-linejoin="round"/></svg>
          <fit-text w="62">撤单</fit-text>
        </div>
        <div class="act">
          <svg width="56" height="60" viewBox="0 0 56 60"><rect x="7" y="8.500" width="42" height="42" rx="5"/><path d="M28 18v24M16 29.500h25" stroke="#a5c8f5"/></svg>
          <fit-text w="94">加自选</fit-text>
        </div>
        <div class="act">
          <svg width="56" height="60" viewBox="0 0 56 60"><circle cx="28" cy="30" r="23.500"/><g stroke="none"><circle cx="17.500" cy="30" r="2.800" fill="#8ab4f4"/><circle cx="28" cy="30" r="2.800" fill="#a5c8f5"/><circle cx="38.500" cy="30" r="2.800" fill="#c5dcf8"/></g></svg>
          <fit-text w="62">更多</fit-text>
        </div>
      </div>
    `);
  }
}

class SystemNav extends HTMLElement {
  constructor() {
    super();
    render(this, `
      <style>
        :host { display: flex; align-items: center; flex: 1; box-sizing: border-box; padding: 0 0 9px 281px; }
        svg { display: block; fill: none; stroke: #777; stroke-width: 4.500; stroke-linecap: round; }
      </style>
      <svg width="40" height="40" viewBox="0 0 40 40"><path d="M4 4.500h32M4 19.500h32M4 34.500h32"/></svg>
      <svg style="margin: 0 202px 0 195px" width="40" height="40" viewBox="0 0 40 40"><rect x="2.500" y="2" width="35" height="35" rx="8"/></svg>
      <svg width="26" height="40" viewBox="0 0 26 40"><path d="M22 3L4 17.500q-2 2 0 4L22 37"/></svg>
    `);
  }
}

/**
 * Inline text tracked so that it takes exactly "w" pixels.
 */
class FitText extends HTMLElement {
  constructor() {
    super();
    render(this, '<style>:host { display: inline-block; flex: none; white-space: nowrap; }</style><slot></slot>');
  }

  /**
   * set letter spacing from the natural width
   */
  connectedCallback() {
    const slot = this.querySelector('slot');
    const text = (slot ? slot.assignedNodes().map((n) => n.textContent).join('') : this.textContent).trim();
    this.style.letterSpacing = '0px';
    const natural = this.getBoundingClientRect().width;
    const target = Number(this.getAttribute('w'));
    if (natural > 0 && target > 0) {
      this.style.letterSpacing = (target - natural) / text.length + 'px';
    }
  }
}

customElements.define('stock-page', class extends HTMLElement {
  constructor() {
    super();
    render(this, '<slot></slot>');
  }
});
customElements.define('status-bar', StatusBar);
customElements.define('stock-header', StockHeader);
customElements.define('quote-panel', QuotePanel);
customElements.define('section-gap', SectionGap);
customElements.define('tab-strip', TabStrip);
customElements.define('tab-item', TabItem);
customElements.define('price-chart', PriceChart);
customElements.define('alert-chart', AlertChart);
customElements.define('chip-row', ChipRow);
customElements.define('chip-item', ChipItem);
customElements.define('live-banner', LiveBanner);
customElements.define('fund-summary', FundSummary);
customElements.define('trade-bar', TradeBar);
customElements.define('system-nav', SystemNav);
// last, so the surrounding styles are in place when it measures
customElements.define('fit-text', FitText);
</script>
</body>
</html>
